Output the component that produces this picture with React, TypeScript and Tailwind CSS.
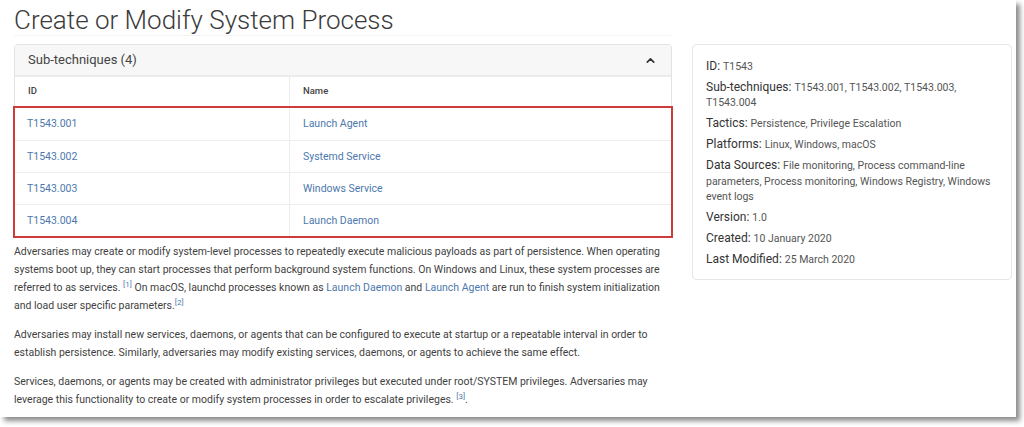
import { ChevronUp } from "lucide-react";

const subs = [
  { id: "T1543.001", name: "Launch Agent" },
  { id: "T1543.002", name: "Systemd Service" },
  { id: "T1543.003", name: "Windows Service" },
  { id: "T1543.004", name: "Launch Daemon" },
];

function Field({ label, children }: { label: string; children: React.ReactNode }) {
  return (
    <div className="text-[12px] leading-[15.5px] text-[#333]">
      <span>{label}: </span>
      <span className="text-[10.5px] text-[#555]">{children}</span>
    </div>
  );
}

export default function App() {
  return (
    <div className="w-[1024px] h-[427px] bg-white" style={{ fontFamily: "Roboto, 'Liberation Sans', sans-serif" }}>
      <div className="w-[1016px] h-[417px] bg-white shadow-[4px_4px_5px_rgba(0,0,0,0.45)] flex">
        {/* main column */}
        <div className="ml-[14px] w-[658px]">
          <h1 className="pt-[5px] text-[26px] leading-[30px] font-light text-[#3b3b3b] border-b border-[#f4f4f4]">
            Create or Modify System Process
          </h1>

          <div className="mt-[8px] border border-[#e3e3e3] border-b-0 rounded-t">
            <div className="h-[32px] bg-[#f7f7f7] border-b-2 border-[#ececec] flex items-center justify-between pl-[13px] pr-[14px]">
              <span className="text-[13px] text-[#444]">Sub-techniques (4)</span>
              <ChevronUp className="w-[13px] h-[13px] text-[#333]" strokeWidth={3} />
            </div>
            <div className="h-[29px] flex text-[9.5px] font-medium text-[#444]">
              <div className="w-[275px] pl-[13px] flex items-center border-r border-[#ececec]">ID</div>
              <div className="pl-[13px] flex items-center">Name</div>
            </div>
          </div>

          <div className="border-2 border-[#cf3a3a] -mx-[1px]">
            {subs.map((s, i) => (
              <div
                key={s.id}
                className={"h-[32px] flex text-[10.5px] text-[#4d78ad] " + (i > 0 ? "border-t border-[#eeeeee]" : "")}
              >
                <div className="w-[275px] pl-[12px] flex items-center border-r border-[#ececec]">{s.id}</div>
                <div className="pl-[13px] flex items-center">{s.name}</div>
              </div>
            ))}
          </div>

          <div className="mt-[5px] text-[10.5px] leading-[18px] text-[#3f3f3f] w-[652px]">
            <p>
              Adversaries may create or modify system-level processes to repeatedly execute malicious payloads as part of persistence. When operating systems boot up, they can start processes that perform background system functions. On Windows and Linux, these system processes are referred to as services.{" "}
              <sup className="text-[#4d78ad] text-[8px]">[1]</sup> On macOS, launchd processes known as{" "}
              <span className="text-[#4d78ad]">Launch Daemon</span> and <span className="text-[#4d78ad]">Launch Agent</span> are run to finish system initialization and load user specific parameters.
              <sup className="text-[#4d78ad] text-[8px]">[2]</sup>
            </p>
            <p className="mt-[11px]">
              Adversaries may install new services, daemons, or agents that can be configured to execute at startup or a repeatable interval in order to establish persistence. Similarly, adversaries may modify existing services, daemons, or agents to achieve the same effect.
            </p>
            <p className="mt-[11px]">
              Services, daemons, or agents may be created with administrator privileges but executed under root/SYSTEM privileges. Adversaries may leverage this functionality to create or modify system processes in order to escalate privileges.{" "}
              <sup className="text-[#4d78ad] text-[8px]">[3]</sup>.
            </p>
          </div>
        </div>

        {/* side card */}
        <div className="ml-[20px] mt-[44px] w-[320px] h-[236px] border border-[#e6e6e6] rounded px-[13px] pt-[13.5px] flex flex-col gap-[5.5px]">
          <Field label="ID">T1543</Field>
          <Field label="Sub-techniques">
            {" "}T1543.001, T1543.002, T1543.003, T1543.004
          </Field>
          <Field label="Tactics">Persistence, Privilege Escalation</Field>
          <Field label="Platforms">Linux, Windows, macOS</Field>
          <Field label="Data Sources">
            File monitoring, Process command-line parameters, Process monitoring, Windows Registry, Windows event logs
          </Field>
          <Field label="Version">1.0</Field>
          <Field label="Created">10 January 2020</Field>
          <Field label="Last Modified">25 March 2020</Field>
        </div>
      </div>
    </div>
  );
}
